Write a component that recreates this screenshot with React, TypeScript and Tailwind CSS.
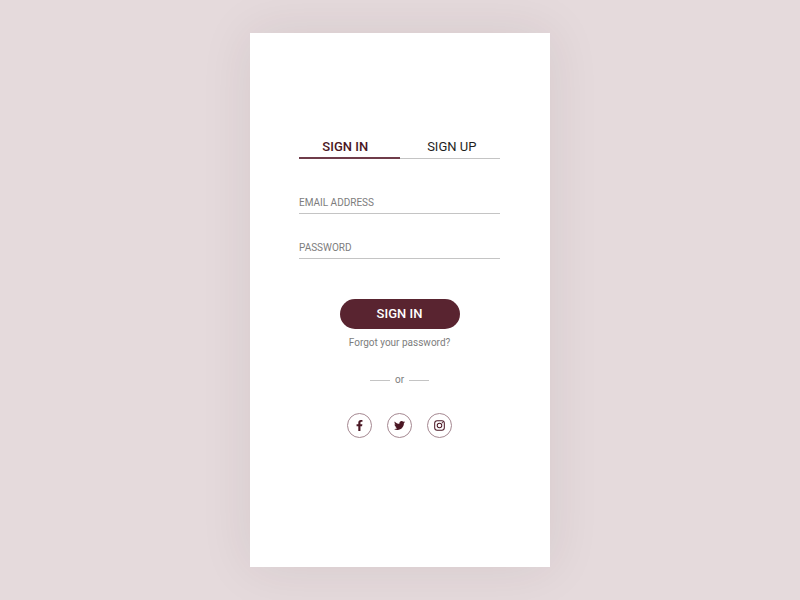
import { useState } from "react";
import type { ReactNode } from "react";
import { FaFacebookF, FaTwitter } from "react-icons/fa";

function Field({ id, type, label }: { id: string; type: string; label: string }) {
  return (
    <div className="grid items-center border-b border-[#c4c4c4] text-[10px]">
      <input
        id={id}
        type={type}
        placeholder=" "
        className="peer col-start-1 row-start-1 h-[22px] w-full bg-transparent text-[#4a1724] outline-none"
      />
      <label
        htmlFor={id}
        className="invisible col-start-1 row-start-1 cursor-text pt-0.5 leading-4 text-[#7d7d7d] peer-placeholder-shown:visible"
      >
        {label}
      </label>
    </div>
  );
}

function InstagramGlyph() {
  return (
    <svg viewBox="0 0 24 24" className="size-[11px]" fill="none" stroke="currentColor" strokeWidth="2.2" aria-hidden="true">
      <rect x="1.5" y="1.5" width="21" height="21" rx="5.5" />
      <circle cx="12" cy="12" r="5" />
      <circle cx="18.2" cy="5.8" r="1.3" fill="currentColor" stroke="none" />
    </svg>
  );
}

function SocialLink({ label, children }: { label: string; children: ReactNode }) {
  return (
    <a
      href="#"
      aria-label={label}
      className="flex size-[25px] items-center justify-center rounded-full border border-[#a58891] text-[#4a1724]"
    >
      {children}
    </a>
  );
}

export default function App() {
  const [tab, setTab] = useState("in");
  const active = "border-b-2 border-[#6f3c4a] font-medium text-[#4a1724]";
  const idle = "border-b border-[#c4c4c4] pb-px text-[#1e1e1e]";
  return (
    <div className="flex min-h-screen items-center justify-center bg-[#e5dadc] font-[Roboto,sans-serif]">
      <main className="w-full max-w-[300px] bg-white pt-[104px] pr-[50px] pb-[129px] pl-[49px] shadow-[0_0_50px_rgba(60,30,40,0.09)]">
        <div role="tablist" className="grid grid-cols-2 text-[13px] leading-5">
          <button
            type="button"
            role="tab"
            aria-selected={tab === "in"}
            onClick={() => setTab("in")}
            className={`h-[22px] pr-2 ${tab === "in" ? active : idle}`}
          >
            SIGN IN
          </button>
          <button
            type="button"
            role="tab"
            aria-selected={tab === "up"}
            onClick={() => setTab("up")}
            className={`h-[22px] pl-1 ${tab === "up" ? active : idle}`}
          >
            SIGN UP
          </button>
        </div>
        <form className="mt-8 flex flex-col" onSubmit={(e) => e.preventDefault()}>
          <div className="flex flex-col gap-[22px]">
            <Field id="email" type="email" label="EMAIL ADDRESS" />
            <Field id="password" type="password" label="PASSWORD" />
          </div>
          <button
            type="submit"
            className="mt-10 h-[30px] w-[120px] self-center rounded-full bg-[#592430] text-[13px] font-medium text-white"
          >
            SIGN IN
          </button>
          <a href="#" className="mt-1.5 self-center text-[10px] leading-4 text-[#7d7d7d]">
            Forgot your password?
          </a>
        </form>
        <div className="mt-[21px] flex items-center justify-center gap-[5px] text-[10px] leading-4 text-[#7d7d7d]">
          <span className="h-px w-5 bg-[#c4c4c4]" />
          <span>or</span>
          <span className="h-px w-5 bg-[#c4c4c4]" />
        </div>
        <div className="mt-[25px] flex justify-center gap-[15px]">
          <SocialLink label="Facebook">
            <FaFacebookF className="size-[11px]" />
          </SocialLink>
          <SocialLink label="Twitter">
            <FaTwitter className="size-[11px]" />
          </SocialLink>
          <SocialLink label="Instagram">
            <InstagramGlyph />
          </SocialLink>
        </div>
      </main>
    </div>
  );
}
